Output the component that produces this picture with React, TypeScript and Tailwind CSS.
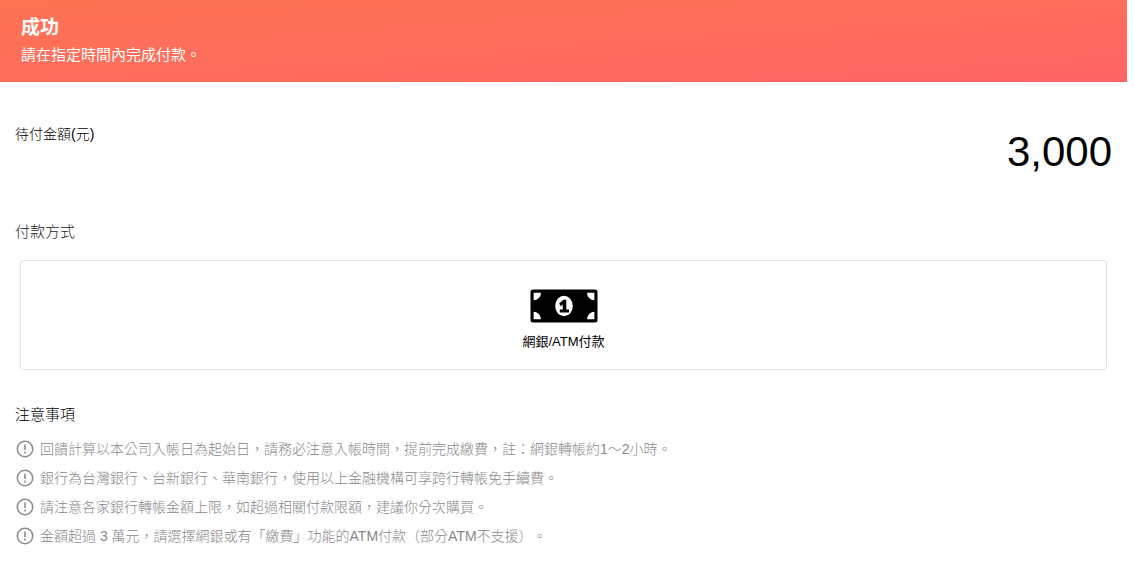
interface Notice {
  id: string;
  text: string;
}

const AMOUNT_DUE = 3000;

const NOTICES: Notice[] = [
  {
    id: 'rebate',
    text: '回饋計算以本公司入帳日為起始日，請務必注意入帳時間，提前完成繳費，註：網銀轉帳約1～2小時。',
  },
  {
    id: 'banks',
    text: '銀行為台灣銀行、台新銀行、華南銀行，使用以上金融機構可享跨行轉帳免手續費。',
  },
  {
    id: 'limit',
    text: '請注意各家銀行轉帳金額上限，如超過相關付款限額，建議你分次購買。',
  },
  {
    id: 'atm',
    text: '金額超過 3 萬元，請選擇網銀或有「繳費」功能的ATM付款（部分ATM不支援）。',
  },
];

function BanknoteIcon() {
  return (
    <svg className="h-[34px] w-[68px]" viewBox="0 0 68 34" aria-hidden="true">
      <rect x="0.5" y="0.5" width="67" height="33" rx="2.5" fill="#000" />
      <g fill="#fff">
        <path d="M3.6 3.8h7.4a7.4 7.4 0 0 1-7.4 7.4z" />
        <path d="M64.4 3.8H57a7.4 7.4 0 0 0 7.4 7.4z" />
        <path d="M3.6 30.2h7.4a7.4 7.4 0 0 0-7.4-7.4z" />
        <path d="M64.4 30.2H57a7.4 7.4 0 0 1 7.4-7.4z" />
        <ellipse cx="34" cy="17" rx="8.8" ry="10.2" />
      </g>
      {/* Numeral on the note */}
      <path d="M29.2 14.4 33.4 10.8h2.9v9.8h2.7v2.8h-9.2v-2.8h2.9v-5l-2 1.6z" fill="#000" />
    </svg>
  );
}

function NoticeIcon() {
  return (
    <svg className="mt-px h-[18px] w-[18px] shrink-0" viewBox="0 0 18 18" fill="none" aria-hidden="true">
      <circle cx="9" cy="9" r="7.7" stroke="#8c8c8c" strokeWidth="1.5" />
      <path d="M9 4.6v5.4" stroke="#8c8c8c" strokeWidth="1.6" />
      <path d="M9 11.6v1.8" stroke="#8c8c8c" strokeWidth="1.6" />
    </svg>
  );
}

export default function App() {
  return (
    <div
      lang="zh-TW"
      className="bg-white pr-[7px] font-['Liberation_Sans','Noto_Sans_CJK_TC',sans-serif] text-black [text-spacing-trim:space-all]"
    >
      <header className="bg-linear-176 from-[#ff7453] to-[#ff6464] px-[21px] pt-[14px] pb-[14px] text-white">
        <h1 className="text-[19px] leading-7 font-bold">成功</h1>
        <p className="text-[15px] leading-[26px]">請在指定時間內完成付款。</p>
      </header>

      <main className="px-[15px] pt-10 pb-4">
        <section className="flex items-start justify-between">
          <h2 className="text-sm leading-6 font-light">待付金額(元)</h2>
          <p className="text-[42px] leading-[60px]">{AMOUNT_DUE.toLocaleString('en-US')}</p>
        </section>

        <section className="pt-10">
          <h2 className="text-[15px] leading-5 font-light text-[#222]">付款方式</h2>
          <div className="px-[5px] pt-[18px]">
            <button
              type="button"
              className="flex h-[110px] w-full cursor-pointer flex-col items-center justify-center gap-[9px] rounded-[3px] border border-[#e4e4e4] bg-white pt-[11px]"
            >
              <BanknoteIcon />
              <span className="text-[13px] leading-5">網銀/ATM付款</span>
            </button>
          </div>
        </section>

        <section className="pt-[35px]">
          <h2 className="text-[15px] leading-5 font-light">注意事項</h2>
          <ul className="mt-[14px] space-y-[9px]">
            {NOTICES.map((notice) => (
              <li key={notice.id} className="flex items-start gap-[6px] px-px text-sm leading-5 font-light text-[#888]">
                <NoticeIcon />
                <span>{notice.text}</span>
              </li>
            ))}
          </ul>
        </section>
      </main>
    </div>
  );
}
